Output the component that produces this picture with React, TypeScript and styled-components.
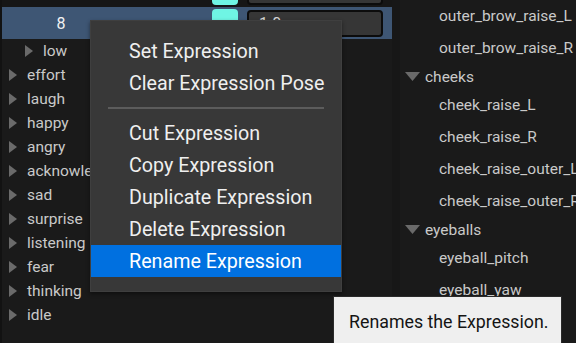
import React from 'react';
import styled, {createGlobalStyle, css} from 'styled-components';

const GlobalStyle = createGlobalStyle`
    html, body {
        margin: 0;
        padding: 0;
        background: #1a1a1a;
        overflow: hidden;
    }
    * {
        box-sizing: border-box;
    }
`;

const Page = styled.div`
    position: relative;
    width: 576px;
    height: 343px;
    overflow: hidden;
    display: flex;
    background: #1a1a1a;
    font-family: Roboto, 'Noto Sans', sans-serif;
`;

const LeftPanel = styled.div`
    width: 392px;
    flex-shrink: 0;
    border-left: 2px solid #121212;
    display: flex;
    flex-direction: column;
`;

const Divider = styled.div`
    width: 8px;
    flex-shrink: 0;
    background: #171717;
`;

const RightPanel = styled.div`
    flex: 1;
    display: flex;
    flex-direction: column;
    overflow: hidden;
`;

interface ValueRowProps {
    selected?: boolean;
}

const ValueRow = styled.div<ValueRowProps>`
    height: 32px;
    flex-shrink: 0;
    display: grid;
    grid-template-columns: 118px 1fr 26px 145px;
    align-items: center;
    padding-right: 9px;
    background: #161616;
    ${(props) => props.selected && css`
        background: #3e5674;
    `}
    ${(props) => !props.selected && css`
        margin-top: -25px;
    `}
`;

const NameCell = styled.div`
    text-align: center;
    color: #f2f2f2;
    font-size: 16px;
`;

const Swatch = styled.div`
    grid-column: 3;
    height: 28px;
    border-radius: 4px;
    background: #6ff5e4;
`;

const ValueInput = styled.div`
    grid-column: 4;
    margin-left: 9px;
    width: 136px;
    height: 27px;
    border: 2px solid #0c0c0c;
    border-radius: 4px;
    background: #363636;
    color: #d6d6d6;
    font-size: 16px;
    display: flex;
    align-items: center;
    padding-left: 10px;
`;

interface TreeRowProps {
    depth: number;
}

const TreeRow = styled.div<TreeRowProps>`
    height: 24px;
    flex-shrink: 0;
    display: flex;
    align-items: center;
    gap: 10px;
    padding-left: ${(props) => 7 + props.depth * 16}px;
    color: #c9c9c9;
    font-size: 15.5px;
    white-space: nowrap;
`;

const Arrow = styled.svg`
    flex-shrink: 0;
    display: block;
`;

interface RightRowProps {
    category?: boolean;
}

const RightRow = styled.div<RightRowProps>`
    height: ${(props) => (props.category ? 25 : 32)}px;
    flex-shrink: 0;
    display: flex;
    align-items: center;
    gap: 5px;
    padding-left: ${(props) => (props.category ? 5 : 39)}px;
    color: #c9c9c9;
    font-size: 15.5px;
    white-space: nowrap;
`;

const Menu = styled.div`
    position: absolute;
    left: 90px;
    top: 20px;
    width: 252px;
    height: 272px;
    padding: 14px 0 16px;
    background: #383838;
    border: 1px solid #3f3f3f;
    box-shadow: 0 2px 4px rgba(0, 0, 0, 0.45);
    display: flex;
    flex-direction: column;
`;

interface MenuItemProps {
    highlighted?: boolean;
}

const MenuItem = styled.div<MenuItemProps>`
    height: 32px;
    flex-shrink: 0;
    display: flex;
    align-items: center;
    padding-left: 38px;
    color: #efefef;
    font-size: 19.7px;
    white-space: nowrap;
    ${(props) => props.highlighted && css`
        background: #0070e0;
        color: #ffffff;
    `}
`;

const Separator = styled.div`
    height: 18px;
    flex-shrink: 0;
    display: flex;
    align-items: center;
    padding: 0 17px;

    &::after {
        content: '';
        flex: 1;
        height: 2px;
        background: #5c5c5c;
    }
`;

const Tooltip = styled.div`
    position: absolute;
    left: 333px;
    top: 296px;
    width: 229px;
    height: 60px;
    padding: 13px 0 0 15px;
    background: #efefef;
    border: 1px solid #2a2a2a;
    color: #141414;
    font-size: 17.8px;
    line-height: 24px;
    white-space: nowrap;
`;

const RightArrow = () => (
    <Arrow width='8' height='12' viewBox='0 0 8 12'>
        <path d='M0 0 L8 6 L0 12 Z' fill='#6a6a6a'/>
    </Arrow>
);

const DownArrow = () => (
    <Arrow width='15' height='9' viewBox='0 0 15 9'>
        <path d='M0 0 L15 0 L7.5 9 Z' fill='#6a6a6a'/>
    </Arrow>
);

const expressions = [
    'effort', 'laugh', 'happy', 'angry', 'acknowledge', 'sad',
    'surprise', 'listening', 'fear', 'thinking', 'idle',
];

const curves: Array<{name: string, category?: boolean}> = [
    {name: 'outer_brow_raise_L'},
    {name: 'outer_brow_raise_R'},
    {name: 'cheeks', category: true},
    {name: 'cheek_raise_L'},
    {name: 'cheek_raise_R'},
    {name: 'cheek_raise_outer_L'},
    {name: 'cheek_raise_outer_R'},
    {name: 'eyeballs', category: true},
    {name: 'eyeball_pitch'},
    {name: 'eyeball_yaw'},
];

const menuTop = ['Set Expression', 'Clear Expression Pose'];
const menuBottom = ['Cut Expression', 'Copy Expression', 'Duplicate Expression', 'Delete Expression', 'Rename Expression'];

const App = () => {
    return (
        <Page>
            <GlobalStyle/>
            <LeftPanel>
                <ValueRow>
                    <NameCell/>
                    <Swatch/>
                    <ValueInput/>
                </ValueRow>
                <ValueRow selected={true}>
                    <NameCell>{'8'}</NameCell>
                    <Swatch/>
                    <ValueInput>{'1.0'}</ValueInput>
                </ValueRow>
                <TreeRow depth={1}>
                    <RightArrow/>
                    {'low'}
                </TreeRow>
                {expressions.map((name) => (
                    <TreeRow
                        key={name}
                        depth={0}
                    >
                        <RightArrow/>
                        {name}
                    </TreeRow>
                ))}
            </LeftPanel>
            <Divider/>
            <RightPanel>
                {curves.map((c) => (
                    <RightRow
                        key={c.name}
                        category={c.category}
                    >
                        {c.category && <DownArrow/>}
                        {c.name}
                    </RightRow>
                ))}
            </RightPanel>
            <Menu>
                {menuTop.map((label) => (
                    <MenuItem key={label}>{label}</MenuItem>
                ))}
                <Separator/>
                {menuBottom.map((label) => (
                    <MenuItem
                        key={label}
                        highlighted={label === 'Rename Expression'}
                    >
                        {label}
                    </MenuItem>
                ))}
            </Menu>
            <Tooltip>{'Renames the Expression.'}</Tooltip>
        </Page>
    );
};

export default App;
